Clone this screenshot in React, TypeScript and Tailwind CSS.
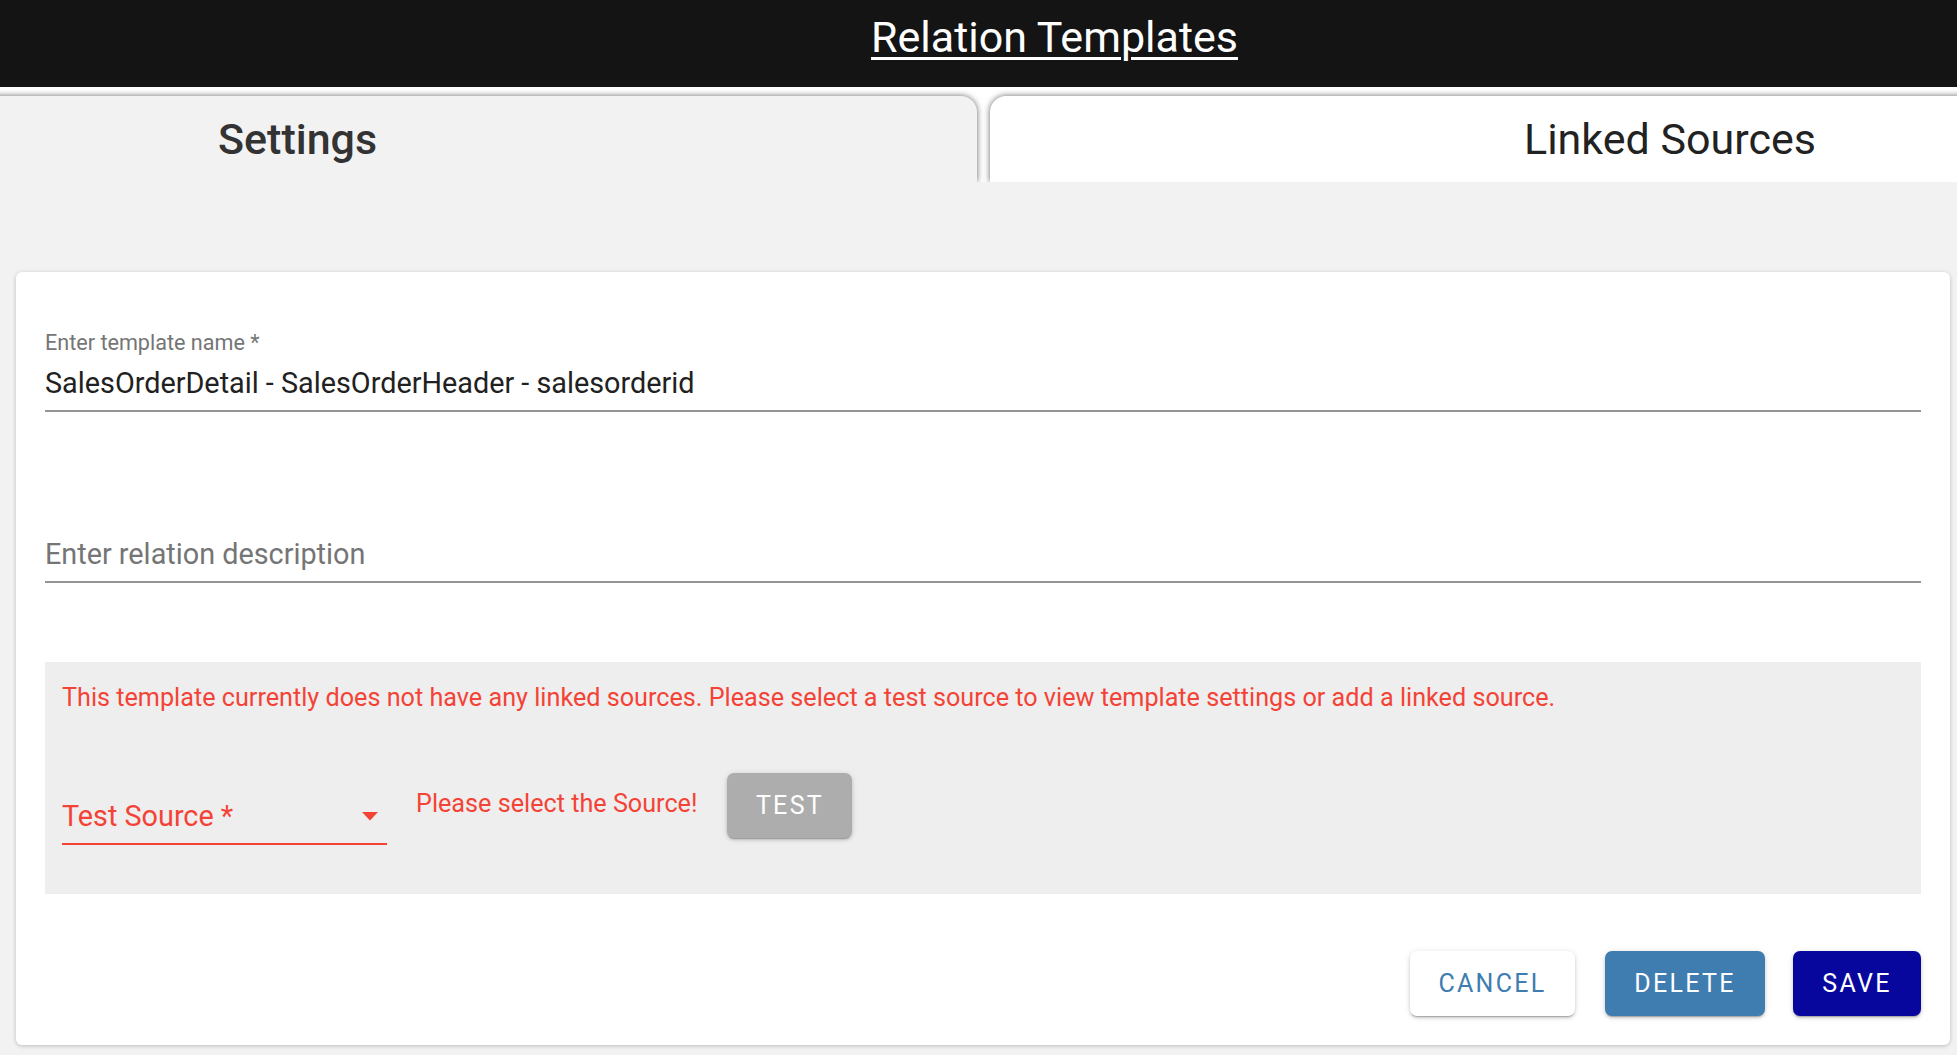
import { useState } from "react";

const btnBase =
  "h-[65px] rounded-[7px] text-[25px] tracking-[2.3px] uppercase shadow-[0_2px_1px_-1px_rgba(0,0,0,0.2),0_2px_3px_0_rgba(0,0,0,0.14),0_1px_6px_0_rgba(0,0,0,0.12)]";

const App = () => {
  const [name, setName] = useState("SalesOrderDetail - SalesOrderHeader - salesorderid");

  return (
    <div className="min-h-screen bg-[#f2f2f2] font-['Roboto',sans-serif]">
      {/* Page title */}
      <header className="h-[87px] bg-[#141414] flex justify-center pl-[152px] pt-[13px]">
        <h1 className="text-[43px] leading-[48px] text-white underline decoration-[3px] underline-offset-[5px]">
          Relation Templates
        </h1>
      </header>

      {/* Tabs */}
      <div className="bg-white pt-[9px] overflow-hidden flex">
        <div className="-ml-[30px] w-[1007px] shrink-0 h-[86px] rounded-t-[16px] bg-[#f2f2f2] shadow-[0_0_6px_rgba(0,0,0,0.6)] flex items-center pl-[248px]">
          <span className="text-[43px] leading-[48px] font-medium text-[#333]">Settings</span>
        </div>
        <div className="ml-[13px] w-[1000px] shrink-0 h-[86px] rounded-t-[16px] bg-white shadow-[0_0_6px_rgba(0,0,0,0.6)] flex items-center pl-[534px]">
          <span className="text-[43px] leading-[48px] text-[#222]">Linked Sources</span>
        </div>
      </div>

      {/* Content */}
      <div className="pt-[90px] pl-[16px] pr-[7px] pb-[9px]">
        <div className="rounded-[6px] bg-white shadow-[0_1px_4px_rgba(0,0,0,0.22)] pt-[59px] px-[29px] pb-[29px]">
          <label className="block text-[21.6px] leading-[24px] text-[#757575]">Enter template name *</label>
          <div className="mt-[12px] border-b-2 border-[#949494] pb-[10px]">
            <input
              value={name}
              onChange={(e) => setName(e.target.value)}
              className="w-full bg-transparent outline-none text-[28.8px] leading-[32px] h-[32px] text-[#212121]"
            />
          </div>

          <div className="mt-[126px] border-b-2 border-[#949494] pb-[10px]">
            <input
              placeholder="Enter relation description"
              className="w-full bg-transparent outline-none text-[28.8px] leading-[32px] h-[32px] text-[#212121] placeholder:text-[#757575]"
            />
          </div>

          {/* Test source box */}
          <div className="mt-[79px] bg-[#eeeeee] pt-[22px] px-[17px] pb-[49px]">
            <p className="text-[25.2px] leading-[28px] text-[#f44336]">
              This template currently does not have any linked sources. Please select a test source to view template settings or add a linked source.
            </p>
            <div className="mt-[61px] flex items-start">
              <div className="mt-[27px] w-[325px] border-b-2 border-[#f44336] pb-[11px] flex items-center justify-between">
                <span className="text-[28.8px] leading-[32px] text-[#f44336]">Test Source *</span>
                <svg width="16" height="9" viewBox="0 0 16 9" className="mr-[9px]">
                  <polygon points="0,0 16,0 8,8.5" fill="#f44336" />
                </svg>
              </div>
              <span className="ml-[29px] mt-[17px] text-[25.2px] leading-[28px] text-[#f44336]">
                Please select the Source!
              </span>
              <button className={`${btnBase} ml-[30px] w-[125px] bg-[#adadad] text-white`}>Test</button>
            </div>
          </div>

          {/* Actions */}
          <div className="mt-[57px] flex justify-end">
            <button className={`${btnBase} w-[165px] bg-white text-[#3f7cb0]`}>Cancel</button>
            <button className={`${btnBase} ml-[30px] w-[160px] bg-[#3f7caf] text-white`}>Delete</button>
            <button className={`${btnBase} ml-[28px] w-[128px] bg-[#07079e] text-white`}>Save</button>
          </div>
        </div>
      </div>
    </div>
  );
};

export default App;
